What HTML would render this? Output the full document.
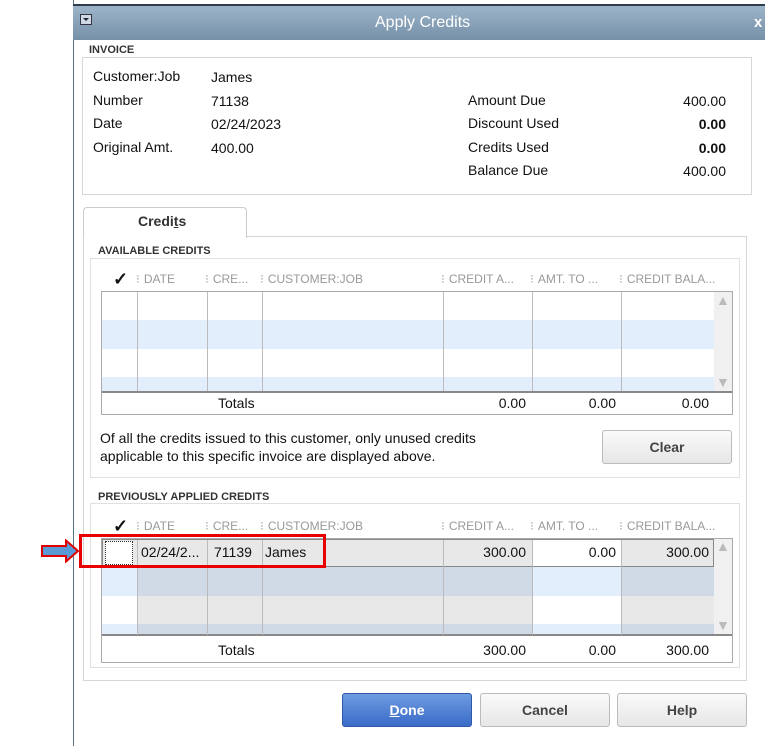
<!DOCTYPE html>
<html><head><style>
*{margin:0;padding:0;box-sizing:border-box}
body{width:765px;height:746px;background:#fff;position:relative;overflow:hidden;font-family:"Liberation Sans",Arial,sans-serif;font-size:14px;color:#111}
.a{position:absolute;white-space:nowrap}
.lbl{font-size:11px;font-weight:bold;color:#333;background:#fff;padding:0 3px}
.hdr{font-size:12px;color:#999}
.hdr i{font-style:normal;color:#aaa;margin-right:5px;letter-spacing:-1px}
.box{position:absolute;border:1px solid #d6d6d6}
.btn{position:absolute;border:1px solid #bbb;border-radius:3px;background:linear-gradient(#fafafa,#e6e6e6);font-weight:bold;color:#444;text-align:center;font-size:14px}
.r{text-align:right}
</style></head><body>
<div class="a" style="left:73px;top:0;width:1px;height:746px;background:#5a7085"></div>
<div class="a" style="left:73px;top:4px;width:692px;height:36px;background:linear-gradient(#9db4c8,#7590a8);border-top:2px solid #2e3e4e"></div>
<div class="a" style="left:80px;top:14px;width:12px;height:11px;border:1px solid #334;background:#cfd9e3"></div>
<div class="a" style="left:83px;top:18px;width:0;height:0;border-left:3px solid transparent;border-right:3px solid transparent;border-top:3px solid #223"></div>
<div class="a" style="left:375px;top:14px;color:#fff;font-size:16px">Apply Credits</div>
<div class="a" style="left:754px;top:14px;color:#fff;font-size:15px;font-weight:bold">x</div>

<div class="box" style="left:82px;top:57px;width:670px;height:138px"></div>
<div class="a lbl" style="left:86px;top:44px">INVOICE</div>
<div class="a" style="left:93px;top:68px">Customer:Job</div><div class="a" style="left:211px;top:69px">James</div>
<div class="a" style="left:93px;top:92px">Number</div><div class="a" style="left:211px;top:93px">71138</div>
<div class="a" style="left:93px;top:115px">Date</div><div class="a" style="left:211px;top:116px">02/24/2023</div>
<div class="a" style="left:93px;top:139px">Original Amt.</div><div class="a" style="left:211px;top:140px">400.00</div>
<div class="a" style="left:468px;top:92px">Amount Due</div><div class="a r" style="left:626px;width:100px;top:93px">400.00</div>
<div class="a" style="left:468px;top:115px">Discount Used</div><div class="a r" style="left:626px;width:100px;top:116px;font-weight:bold">0.00</div>
<div class="a" style="left:468px;top:139px">Credits Used</div><div class="a r" style="left:626px;width:100px;top:140px;font-weight:bold">0.00</div>
<div class="a" style="left:468px;top:162px">Balance Due</div><div class="a r" style="left:626px;width:100px;top:163px">400.00</div>

<div class="box" style="left:83px;top:236px;width:664px;height:445px"></div>
<div class="a" style="left:83px;top:207px;width:164px;height:31px;border:1px solid #ccc;border-bottom:none;border-radius:4px 4px 0 0;background:#fff"></div>
<div class="a" style="left:138px;top:213px;font-weight:bold;color:#333">Credi<u>t</u>s</div>

<!-- available -->
<div class="box" style="left:90px;top:258px;width:650px;height:220px;border-color:#e0e0e0"></div>
<div class="a lbl" style="left:95px;top:245px">AVAILABLE CREDITS</div>
<div class="a" style="left:113px;top:269px;font-size:18px;font-weight:bold">&#10003;</div>
<div class="a hdr" style="left:136px;top:272px"><i>⁝</i>DATE</div>
<div class="a hdr" style="left:205px;top:272px"><i>⁝</i>CRE...</div>
<div class="a hdr" style="left:260px;top:272px"><i>⁝</i>CUSTOMER:JOB</div>
<div class="a hdr" style="left:441px;top:272px"><i>⁝</i>CREDIT A...</div>
<div class="a hdr" style="left:530px;top:272px"><i>⁝</i>AMT. TO ...</div>
<div class="a hdr" style="left:619px;top:272px"><i>⁝</i>CREDIT BALA...</div>
<div class="a" style="left:101px;top:291px;width:632px;height:124px;border:1px solid #aaa;background:#fff"></div>
<div class="a" style="left:102px;top:320px;width:612px;height:29px;background:#e2eefc"></div>
<div class="a" style="left:102px;top:377px;width:612px;height:15px;background:#e2eefc"></div>
<div class="a" style="left:714px;top:292px;width:18px;height:100px;background:#f0f0f0"></div>
<div class="a" style="left:716px;top:292px;color:#bbb;font-size:14px">▲</div>
<div class="a" style="left:716px;top:374px;color:#bbb;font-size:14px">▼</div>
<div class="a" style="left:102px;top:391px;width:630px;height:2px;background:#888"></div>
<div class="a" style="left:137px;top:292px;width:1px;height:99px;background:#bbb"></div>
<div class="a" style="left:207px;top:292px;width:1px;height:99px;background:#bbb"></div>
<div class="a" style="left:262px;top:292px;width:1px;height:99px;background:#bbb"></div>
<div class="a" style="left:443px;top:292px;width:1px;height:99px;background:#bbb"></div>
<div class="a" style="left:532px;top:292px;width:1px;height:99px;background:#bbb"></div>
<div class="a" style="left:621px;top:292px;width:1px;height:99px;background:#bbb"></div>
<div class="a" style="left:218px;top:395px">Totals</div>
<div class="a r" style="left:446px;width:80px;top:395px">0.00</div>
<div class="a r" style="left:536px;width:80px;top:395px">0.00</div>
<div class="a r" style="left:629px;width:80px;top:395px">0.00</div>
<div class="a" style="left:100px;top:429px;line-height:18px">Of all the credits issued to this customer, only unused credits<br>applicable to this specific invoice are displayed above.</div>
<div class="btn" style="left:602px;top:430px;width:130px;height:34px;line-height:32px">Clear</div>

<!-- previously -->
<div class="box" style="left:90px;top:503px;width:650px;height:165px;border-color:#e0e0e0"></div>
<div class="a lbl" style="left:95px;top:491px">PREVIOUSLY APPLIED CREDITS</div>
<div class="a" style="left:113px;top:516px;font-size:18px;font-weight:bold">&#10003;</div>
<div class="a hdr" style="left:136px;top:519px"><i>⁝</i>DATE</div>
<div class="a hdr" style="left:205px;top:519px"><i>⁝</i>CRE...</div>
<div class="a hdr" style="left:260px;top:519px"><i>⁝</i>CUSTOMER:JOB</div>
<div class="a hdr" style="left:441px;top:519px"><i>⁝</i>CREDIT A...</div>
<div class="a hdr" style="left:530px;top:519px"><i>⁝</i>AMT. TO ...</div>
<div class="a hdr" style="left:619px;top:519px"><i>⁝</i>CREDIT BALA...</div>
<div class="a" style="left:101px;top:538px;width:632px;height:125px;border:1px solid #aaa;background:#fff"></div>
<div class="a" style="left:102px;top:539px;width:612px;height:28px;background:#e8e8e8;border:1px solid #888"></div>
<div class="a" style="left:533px;top:540px;width:88px;height:26px;background:#fff"></div>
<div class="a" style="left:102px;top:567px;width:612px;height:29px;background:#cfdae6"></div>
<div class="a" style="left:102px;top:596px;width:612px;height:28px;background:#e8e8e8"></div>
<div class="a" style="left:102px;top:624px;width:612px;height:11px;background:#cfdae6"></div>
<div class="a" style="left:102px;top:567px;width:35px;height:29px;background:#e2eefc"></div>
<div class="a" style="left:533px;top:567px;width:88px;height:29px;background:#e2eefc"></div>
<div class="a" style="left:102px;top:596px;width:35px;height:28px;background:#fff"></div>
<div class="a" style="left:533px;top:596px;width:88px;height:28px;background:#fff"></div>
<div class="a" style="left:102px;top:624px;width:35px;height:11px;background:#e2eefc"></div>
<div class="a" style="left:533px;top:624px;width:88px;height:11px;background:#e2eefc"></div>
<div class="a" style="left:105px;top:541px;width:28px;height:24px;border:1px dotted #333;background:#fff"></div>
<div class="a" style="left:714px;top:539px;width:18px;height:96px;background:#f0f0f0"></div>
<div class="a" style="left:716px;top:538px;color:#bbb;font-size:14px">▲</div>
<div class="a" style="left:716px;top:617px;color:#bbb;font-size:14px">▼</div>
<div class="a" style="left:102px;top:634px;width:630px;height:2px;background:#888"></div>
<div class="a" style="left:137px;top:540px;width:1px;height:95px;background:#bbb"></div>
<div class="a" style="left:207px;top:540px;width:1px;height:95px;background:#bbb"></div>
<div class="a" style="left:262px;top:540px;width:1px;height:95px;background:#bbb"></div>
<div class="a" style="left:443px;top:540px;width:1px;height:95px;background:#bbb"></div>
<div class="a" style="left:532px;top:540px;width:1px;height:95px;background:#bbb"></div>
<div class="a" style="left:621px;top:540px;width:1px;height:95px;background:#bbb"></div>
<div class="a" style="left:141px;top:544px">02/24/2...</div>
<div class="a" style="left:214px;top:544px">71139</div>
<div class="a" style="left:265px;top:544px">James</div>
<div class="a r" style="left:446px;width:80px;top:544px">300.00</div>
<div class="a r" style="left:536px;width:80px;top:544px">0.00</div>
<div class="a r" style="left:629px;width:80px;top:544px">300.00</div>
<div class="a" style="left:218px;top:642px">Totals</div>
<div class="a r" style="left:446px;width:80px;top:642px">300.00</div>
<div class="a r" style="left:536px;width:80px;top:642px">0.00</div>
<div class="a r" style="left:629px;width:80px;top:642px">300.00</div>

<div class="a" style="left:79px;top:534px;width:247px;height:34px;border:3px solid #e80000"></div>
<svg class="a" style="left:40px;top:539px" width="40" height="24"><path d="M2 7 H26 V1.5 L38 12 L26 22.5 V17 H2 Z" fill="#5b9bd5" stroke="#e00000" stroke-width="2"/></svg>

<div class="btn" style="left:342px;top:693px;width:130px;height:34px;line-height:32px;background:linear-gradient(#6f9be0,#3a6cc8);border-color:#2f58a8;color:#fff"><u>D</u>one</div>
<div class="btn" style="left:480px;top:693px;width:130px;height:34px;line-height:32px">Cancel</div>
<div class="btn" style="left:617px;top:693px;width:130px;height:34px;line-height:32px">Help</div>
</body></html>
